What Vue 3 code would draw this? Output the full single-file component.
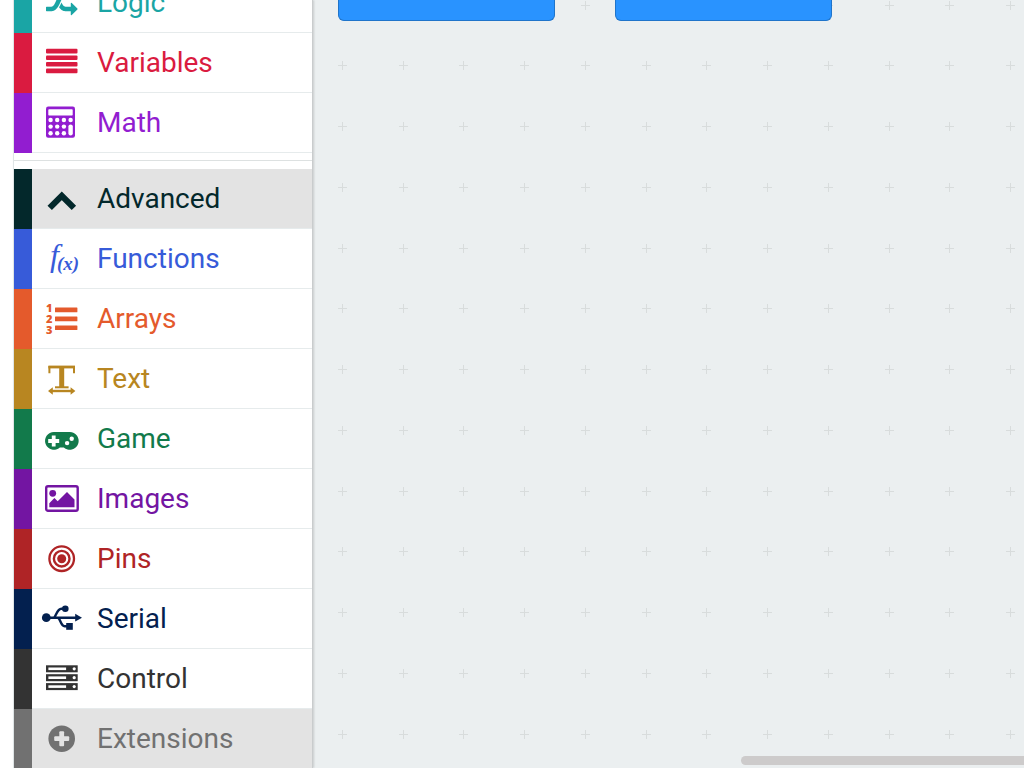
<template>
    <div class="editor">
        <nav class="toolbox" aria-label="Toolbox">
            <ul class="category-list">
                <li
                    v-for="item in categories"
                    :key="item.name"
                    class="category"
                    :class="[item.icon, { shaded: item.shaded, separated: item.separated }]"
                >
                    <button type="button" class="category-row">
                        <svg class="icon" viewBox="0 0 40 40" aria-hidden="true">
                            <g v-if="item.icon === 'logic'" transform="translate(4 3.5) scale(0.0176)">
                                <path d="M666 481q-60 92-137 273-22-45-37-72.5t-40.5-63.5-51-56.5-63-35-81.5-14.5h-224q-14 0-23-9t-9-23v-192q0-14 9-23t23-9h224q250 0 410 225zm1126 799q0 14-9 23l-320 320q-9 9-23 9-13 0-22.5-9.5t-9.5-22.5v-192q-32 0-85 .5t-81 1-73-1-71-5-64-10.5-63-18.5-58-28.5-59-40-55-53.5-56-69.5q59-93 136-273 22 45 37 72.5t40.5 63.5 51 56.5 63 35 81.5 14.5h256v-192q0-14 9-23t23-9q12 0 24 10l319 319q9 9 9 23zm0-896q0 14-9 23l-320 320q-9 9-23 9-13 0-22.5-9.5t-9.5-22.5v-192h-256q-48 0-87 15t-69 45-51 61.5-45 77.5q-32 62-78 171-29 66-49.5 111t-54 105-64 100-74 83-90 68.5-106.5 42-128 16.5h-224q-14 0-23-9t-9-23v-192q0-14 9-23t23-9h224q48 0 87-15t69-45 51-61.5 45-77.5q32-62 78-171 29-66 49.5-111t54-105 64-100 74-83 90-68.5 106.5-42 128-16.5h256v-192q0-14 9-23t23-9q12 0 24 10l319 319q9 9 9 23z" />
                            </g>
                            <g v-else-if="item.icon === 'variables'">
                                <rect v-for="y in [5.8, 12.4, 19, 25.6]" :key="y" x="4" :y="y" width="31.5" height="4.6" rx="1" />
                            </g>
                            <g v-else-if="item.icon === 'math'">
                                <rect x="4" y="3.5" width="29" height="31.2" rx="2.2" />
                                <rect class="hole" x="6.3" y="6.2" width="24.4" height="6.4" rx="0.8" />
                                <template v-for="y in [17, 23.6, 30.3]" :key="y">
                                    <circle v-for="x in [8.6, 15.2, 21.9]" :key="x" class="hole" :cx="x" :cy="y" r="2.2" />
                                </template>
                                <circle class="hole" cx="28.6" cy="17" r="2.2" />
                                <rect class="hole" x="26.4" y="21.4" width="4.4" height="11.1" rx="2.2" />
                            </g>
                            <path v-else-if="item.icon === 'advanced'" class="line" stroke-width="6.2" d="M7.7 28.9 19.8 16.8 31.9 28.9" />
                            <text v-else-if="item.icon === 'functions'" class="formula" x="8" y="27">
                                f<tspan class="argument" x="15" y="31">(x)</tspan>
                            </text>
                            <g v-else-if="item.icon === 'arrays'">
                                <text class="digit" x="4" y="13">1</text>
                                <text class="digit" x="4" y="24">2</text>
                                <text class="digit" x="4" y="35">3</text>
                                <rect v-for="y in [8.6, 17.6, 26.4]" :key="y" x="13" :y="y" width="22.4" height="4.6" rx="0.5" />
                            </g>
                            <g v-else-if="item.icon === 'text'">
                                <path class="line" stroke-width="2.8" d="M6.4 8H33" />
                                <path class="line" stroke-width="2" d="M7.4 7V14.2M32 7V14.2" />
                                <path class="line" stroke-width="5" d="M19.7 8V28.5" />
                                <path class="line" stroke-width="2" d="M13 28.3H26.6" />
                                <path class="line" stroke-width="2.4" d="M9 32H31" />
                                <path d="M6 32 10.8 28.3V35.7ZM33.4 32 28.6 28.3V35.7Z" />
                            </g>
                            <g v-else-if="item.icon === 'game'">
                                <path d="M12 13H27.7A8.9 8.9 0 1 1 21.8 28.5H17.9A8.9 8.9 0 1 1 12 13Z" />
                                <path class="cut" stroke-width="3.8" d="M6.2 22H17.2M11.7 16.5V27.5" />
                                <circle class="hole" cx="25.1" cy="24.1" r="2.2" />
                                <circle class="hole" cx="29.7" cy="19.8" r="2.2" />
                            </g>
                            <g v-else-if="item.icon === 'images'">
                                <rect class="line" stroke-width="2.4" x="4.2" y="7.3" width="31.5" height="24.5" rx="1.8" />
                                <circle cx="10.7" cy="14.3" r="3.4" />
                                <path d="M7.3 28.2V24.3L12.4 19.1 15.7 22.2 25 12.9 32.5 20.4V28.2Z" />
                            </g>
                            <g v-else-if="item.icon === 'pins'">
                                <circle class="line" stroke-width="2.3" cx="19.7" cy="19.7" r="12.3" />
                                <circle class="line" stroke-width="2.4" cx="19.7" cy="19.7" r="7.8" />
                                <circle cx="19.7" cy="19.7" r="4.5" />
                            </g>
                            <g v-else-if="item.icon === 'serial'">
                                <circle cx="4.3" cy="18.7" r="4.4" />
                                <circle cx="23.3" cy="9.7" r="3.3" />
                                <rect x="24.2" y="24" width="6.6" height="6.8" />
                                <path d="M33.2 14.8 40 18.7 33.2 22.6Z" />
                                <path class="line" stroke-width="2.4" d="M4 18.7H35M11.4 18.7C14 18.7 14.6 9.7 19.4 9.7H23M15.6 18.7C18.4 18.7 18.4 27.2 22.6 27.2H26" />
                            </g>
                            <g v-else-if="item.icon === 'control'">
                                <template v-for="y in [6.3, 15.2, 24.1]" :key="y">
                                    <rect x="4" :y="y" width="31.7" height="7" />
                                    <rect class="hole" x="6.4" :y="y + 2.2" width="17.7" height="2.6" />
                                    <circle class="hole" cx="32.2" :cy="y + 3.5" r="1.6" />
                                </template>
                            </g>
                            <g v-else-if="item.icon === 'extensions'">
                                <circle cx="19.7" cy="19.7" r="13.3" />
                                <rect class="hole" x="12.2" y="17.3" width="15" height="4.8" rx="1" />
                                <rect class="hole" x="17.3" y="12.2" width="4.8" height="15" rx="1" />
                            </g>
                        </svg>
                        <span class="label">{{ item.name }}</span>
                    </button>
                </li>
            </ul>
        </nav>

        <main class="workspace">
            <svg class="grid" aria-hidden="true">
                <defs>
                    <!-- four crosses per tile, 243 / 4 apart -->
                    <pattern id="crosses" x="23" y="-2" width="243" height="243" patternUnits="userSpaceOnUse">
                        <template v-for="y in gridRows" :key="y">
                            <path v-for="x in gridColumns" :key="x" :d="`M${x + 2} ${y + 7.5}h9M${x + 6.5} ${y + 3}v9`" />
                        </template>
                    </pattern>
                </defs>
                <rect width="100%" height="100%" fill="url(#crosses)" />
            </svg>
            <div class="blocks">
                <div class="block"></div>
                <div class="block"></div>
            </div>
            <div class="scrollbar"></div>
        </main>
    </div>
</template>

<script setup>
const gridColumns = [0, 61, 121, 182];
const gridRows = [0, 60, 121, 182];

const categories = [
    { name: 'Logic', icon: 'logic' },
    { name: 'Variables', icon: 'variables' },
    { name: 'Math', icon: 'math' },
    { name: 'Advanced', icon: 'advanced', shaded: true, separated: true },
    { name: 'Functions', icon: 'functions' },
    { name: 'Arrays', icon: 'arrays' },
    { name: 'Text', icon: 'text' },
    { name: 'Game', icon: 'game' },
    { name: 'Images', icon: 'images' },
    { name: 'Pins', icon: 'pins' },
    { name: 'Serial', icon: 'serial' },
    { name: 'Control', icon: 'control' },
    { name: 'Extensions', icon: 'extensions', shaded: true }
];
</script>

<style>
body {
    background: #fff;
}
</style>

<style scoped>
.editor {
    display: flex;
    height: 100vh;
    padding-left: 13px;
    overflow: hidden;
    box-sizing: border-box;
    font-family: Roboto, "Liberation Sans", sans-serif;
    text-rendering: geometricPrecision;
}

.toolbox {
    position: relative;
    z-index: 1;
    flex: 0 0 300px;
    box-sizing: border-box;
    border-left: 1px solid #dfe5e6;
    border-right: 1px solid #c9cccd;
    background: #fff;
    box-shadow: 1px 0 2px rgba(0, 0, 0, 0.15);
}

/* scrolled down, so the first category is partly out of view */
.category-list {
    margin: -27px 0 0;
    padding: 0;
    list-style: none;
}

.category.separated {
    margin-top: 7px;
    padding-top: 8px;
    border-top: 1px solid #dde1e1;
}

.category-row {
    display: flex;
    align-items: center;
    gap: 15px;
    width: 100%;
    height: 60px;
    padding: 0 0 0 10px;
    border: 0;
    border-left: 18px solid currentColor;
    background: #fff;
    box-shadow: inset 0 -1px #e6ebec;
    color: inherit;
    font: inherit;
    font-size: 28px;
    line-height: 32px;
    text-align: left;
    cursor: pointer;
}

.shaded .category-row {
    background: #e3e3e3;
}

.icon {
    flex: none;
    width: 40px;
    height: 40px;
    overflow: visible;
    fill: currentColor;
}

.icon .line {
    fill: none;
    stroke: currentColor;
}

.icon .hole {
    fill: #fff;
}

.icon .cut {
    fill: none;
    stroke: #fff;
}

.shaded .icon .hole {
    fill: #e3e3e3;
}

.formula {
    font-family: "Liberation Serif", serif;
    font-size: 32px;
    font-style: italic;
}

.argument {
    font-size: 19px;
    font-weight: bold;
}

.digit {
    font-family: "Open Sans", sans-serif;
    font-size: 11px;
    font-weight: 800;
}

.logic { color: #1aa5a5; }
.variables { color: #da1b40; }
.math { color: #921dd0; }
.advanced { color: #03282b; }
.functions { color: #375bd9; }
.arrays { color: #e45a2c; }
.text { color: #b88621; }
.game { color: #127a4b; }
.images { color: #7315a2; }
.pins { color: #af2426; }
.serial { color: #03204f; }
.control { color: #333333; }
.extensions { color: #717171; }

.workspace {
    position: relative;
    flex: 1;
    min-width: 0;
    overflow: hidden;
    background: #ebeff0;
}

.grid {
    position: absolute;
    top: 0;
    left: 0;
    width: 100%;
    height: 100%;
    stroke: #d8dcdc;
    stroke-width: 1px;
}

.grid rect {
    stroke: none;
}

.blocks {
    position: relative;
    display: flex;
    gap: 60px;
    padding-left: 25px;
}

.block {
    flex: 0 0 217px;
    height: 21px;
    box-sizing: border-box;
    border: 1px solid #1f74ca;
    border-top: 0;
    border-radius: 0 0 6px 6px;
    background: #2993ff;
}

.scrollbar {
    position: absolute;
    right: 0;
    bottom: 3px;
    width: 283px;
    height: 9px;
    border-radius: 5px 0 0 5px;
    background: #cdcbcb;
}
</style>
